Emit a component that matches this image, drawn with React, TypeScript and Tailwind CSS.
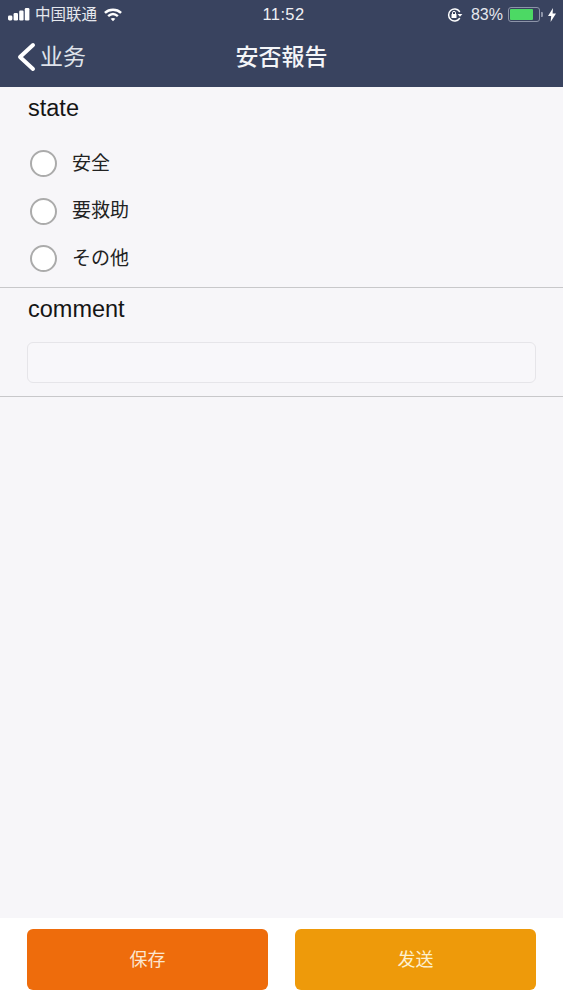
import React from 'react';

const FONT = "font-['Liberation_Sans','Noto_Sans_CJK_JP',sans-serif]";
const options = ['安全', '要救助', 'その他'];

const StatusBar: React.FC = () => (
  <div className="flex h-[30px] items-center justify-between pb-[1px] pl-[8px] pr-[7px] text-white">
    <div className="flex w-[200px] items-center">
      <svg width="22" height="13" viewBox="0 0 22 13" fill="#fff">
        <rect x="0" y="7.5" width="4.4" height="5" rx="1.4" />
        <rect x="5.6" y="5" width="4.4" height="7.5" rx="1.2" />
        <rect x="11.2" y="2.5" width="4.4" height="10" rx="1.2" />
        <rect x="16.8" y="0" width="4.6" height="12.5" rx="1.2" />
      </svg>
      <span className="ml-[5px] text-[15.5px] text-[#e6e8ee]">中国联通</span>
      <svg className="ml-[7px]" width="18" height="14" viewBox="0 0 20 15" fill="none" stroke="#fff" strokeWidth="2.8">
        <path d="M1 5.2 C6 0.6 14 0.6 19 5.2" />
        <path d="M4.6 8.8 C8 5.8 12 5.8 15.4 8.8" />
        <path d="M7.4 11.6 L10 14.4 L12.6 11.6 C11 10.4 9 10.4 7.4 11.6 Z" fill="#fff" stroke="none" />
      </svg>
    </div>
    <span className="ml-[3px] text-[16.5px] tracking-[0.4px] text-[#f0f1f5]">11:52</span>
    <div className="flex w-[200px] items-center justify-end">
      <svg width="18" height="16" viewBox="0 0 18 16" fill="none" stroke="#fff" strokeWidth="1.5">
        <path d="M13.5 11.5 A6 6 0 1 1 13.5 4.5" strokeLinecap="round" />
        <path d="M11.6 7 L16.4 7 L14 9.8 Z" fill="#fff" stroke="none" />
        <rect x="5.5" y="7" width="5" height="4" rx="0.6" fill="#fff" stroke="none" />
        <path d="M6.5 7 V5.8 A1.5 1.5 0 0 1 9.5 5.8 V7" strokeWidth="1" />
      </svg>
      <span className="ml-[7px] text-[16px] text-[#e6e8ee]">83%</span>
      <div className="ml-[5px] flex h-[15px] w-[32px] items-center rounded-[3px] border border-[#8d94a8] p-[1px]">
        <div className="h-full w-[83%] rounded-[1px] bg-[#4cd964]" />
      </div>
      <div className="ml-[1px] h-[5px] w-[2px] rounded-r-[1px] bg-[#8d94a8]" />
      <svg className="ml-[5px]" width="8" height="14" viewBox="0 0 8 14" fill="#fff">
        <path d="M5 0 L0 8 H3.2 L2.6 14 L8 5.6 H4.6 Z" />
      </svg>
    </div>
  </div>
);

const NavBar: React.FC = () => (
  <div className="relative flex h-[57px] items-center justify-center">
    <div className="absolute left-[17px] top-[12px] flex items-center text-[#dfe2ea]">
      <svg width="19" height="30" viewBox="0 0 19 30" fill="none" stroke="#fff" strokeWidth="4" strokeLinecap="round" strokeLinejoin="round">
        <path d="M16 3 L3 15 L16 27" />
      </svg>
      <span className="ml-[4px] text-[23px] leading-none">业务</span>
    </div>
    <h1 className="mt-[-2px] text-[23px] font-medium text-[#f4f5f8]">安否報告</h1>
  </div>
);

const Radio: React.FC<{ label: string }> = ({ label }) => (
  <label className="flex h-[47.5px] items-center pl-[30px]">
    <span className="h-[27px] w-[27px] rounded-full border-2 border-[#ababab] bg-white" />
    <span className="ml-[15px] text-[19px] text-[#222]">{label}</span>
  </label>
);

const App: React.FC = () => {
  return (
    <div className={`flex h-[1000px] w-[563px] flex-col overflow-hidden bg-[#f7f6f9] ${FONT}`}>
      <header className="h-[87px] shrink-0 bg-[#39435f]">
        <StatusBar />
        <NavBar />
      </header>

      <section className="h-[201px] shrink-0 border-b border-[#c8c8ca] pl-[28px]">
        <div className="pt-[8px] text-[23.5px] leading-[27px] text-[#151515]">state</div>
        <div className="-ml-[28px] mt-[18px]">
          {options.map((o) => (
            <Radio key={o} label={o} />
          ))}
        </div>
      </section>

      <section className="h-[109px] shrink-0 border-b border-[#c8c8ca] px-[27px]">
        <div className="pl-[1px] pt-[8px] text-[23.5px] leading-[27px] text-[#151515]">comment</div>
        <input
          type="text"
          className="mt-[19px] block h-[41px] w-full rounded-[6px] border border-[#e6e5e9] bg-[#f8f7fa] outline-none"
        />
      </section>

      <div className="flex-1" />

      <footer className="flex h-[82px] shrink-0 justify-between bg-white px-[27px] pt-[11px]">
        <button className="h-[61px] w-[241px] rounded-[6px] bg-[#ee6c0c] pt-[2px] text-[18px] text-[#fbe6d0]">保存</button>
        <button className="h-[61px] w-[241px] rounded-[6px] bg-[#ee9a0a] pt-[2px] text-[18px] text-[#fdf0d0]">发送</button>
      </footer>
    </div>
  );
};

export default App;
